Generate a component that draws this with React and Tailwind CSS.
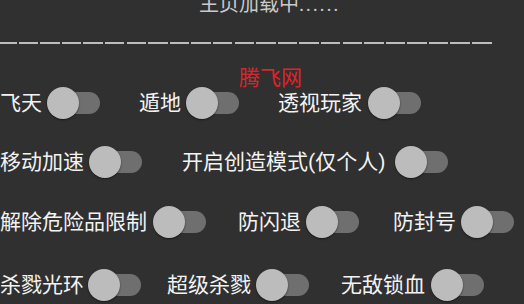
import React from "react";

function Toggle({ ml = "ml-[5px]" }) {
  return (
    <div className={`relative w-[53px] h-[32px] shrink-0 ${ml}`}>
      <div className="absolute left-[8px] right-0 top-[5px] h-[22px] rounded-full bg-[#6f6f6f]" />
      <div className="absolute left-0 top-0 w-[32px] h-[32px] rounded-full bg-[#bcbcbc] shadow-[0_1px_2px_rgba(0,0,0,0.5)]" />
    </div>
  );
}

function Item({ label, ml = "", tml }) {
  return (
    <div className={`flex items-center shrink-0 ${ml}`}>
      <span className="whitespace-nowrap text-[21px] leading-[28px] text-[#f3f3f3]">{label}</span>
      <Toggle ml={tml} />
    </div>
  );
}

export default function App() {
  const dashes = Array.from({ length: 23 });
  return (
    <div
      className="relative w-[524px] h-[304px] overflow-hidden bg-[#303030]"
      style={{ fontFamily: "Roboto, 'Noto Sans CJK SC', sans-serif" }}
    >
      <div className="-mt-[6px] h-[20px] pl-[199px] text-[20px] leading-[20px] text-[#c9c9c9] whitespace-nowrap">
        主页加载中<span className="tracking-[1.6px]">......</span>
      </div>
      <div className="mt-[28px] -ml-[3px] flex gap-[2.1px]">
        {dashes.map((_, i) => (
          <span key={i} className="block w-[19.5px] h-[2px] shrink-0 bg-[#bdbdbd]" />
        ))}
      </div>
      <div className="mt-[29px] flex h-[60px] items-center">
        <Item label="飞天" />
        <Item label="遁地" ml="ml-[39px]" />
        <Item label="透视玩家" ml="ml-[39px]" tml="ml-[6px]" />
      </div>
      <div className="flex h-[58px] items-center">
        <Item label="移动加速" />
        <Item label="开启创造模式(仅个人)" ml="ml-[40px]" tml="ml-[9px]" />
      </div>
      <div className="flex h-[62px] items-center">
        <Item label="解除危险品限制" tml="ml-[6px]" />
        <Item label="防闪退" ml="ml-[32px]" />
        <Item label="防封号" ml="ml-[34px]" />
      </div>
      <div className="flex h-[64px] items-center">
        <Item label="杀戮光环" tml="ml-[4px]" />
        <Item label="超级杀戮" ml="ml-[26px]" />
        <Item label="无敌锁血" ml="ml-[32px]" tml="ml-[6px]" />
      </div>
      <div className="absolute left-[239px] top-[64px] text-[21px] leading-[28px] text-[#e0222a] whitespace-nowrap">
        腾飞网
      </div>
    </div>
  );
}
